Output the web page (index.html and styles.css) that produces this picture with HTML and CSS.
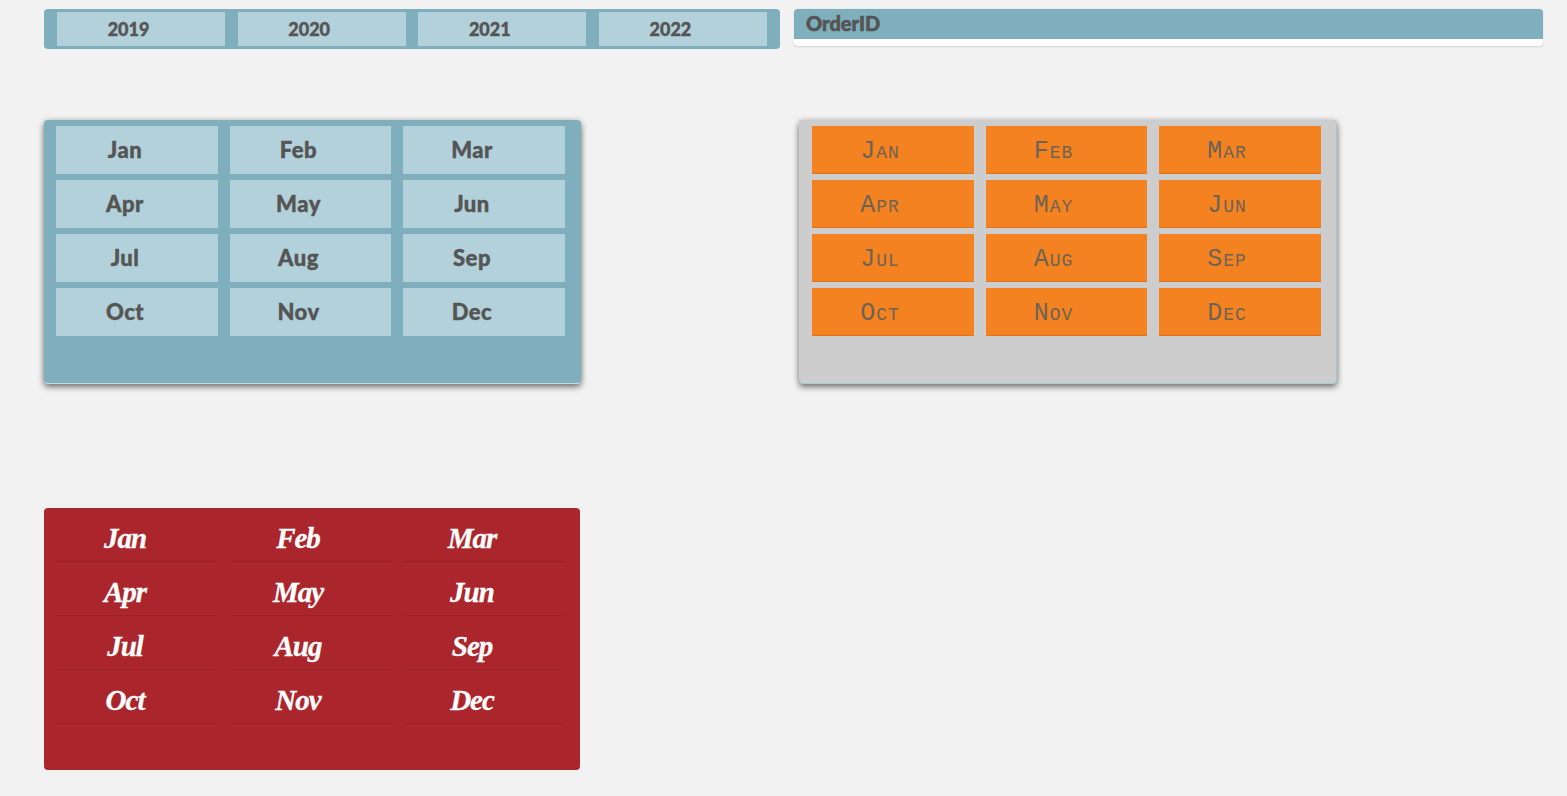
FILE: index.html
```html
<!DOCTYPE html>
<html lang="en">

<head>
    <meta charset="UTF-8">
    <title>Slicers</title>
    <link rel="stylesheet" href="styles.css">
</head>

<body>
    <div class="row row-top">
        <div class="year-slicer">
            <div class="year">2019</div>
            <div class="year">2020</div>
            <div class="year">2021</div>
            <div class="year">2022</div>
        </div>
        <div class="order-box">
            <div class="order-head">OrderID</div>
        </div>
    </div>

    <div class="row row-middle">
        <div class="months months-teal">
            <div class="month">Jan</div>
            <div class="month">Feb</div>
            <div class="month">Mar</div>
            <div class="month">Apr</div>
            <div class="month">May</div>
            <div class="month">Jun</div>
            <div class="month">Jul</div>
            <div class="month">Aug</div>
            <div class="month">Sep</div>
            <div class="month">Oct</div>
            <div class="month">Nov</div>
            <div class="month">Dec</div>
        </div>
        <div class="months months-orange">
            <div class="month">Jan</div>
            <div class="month">Feb</div>
            <div class="month">Mar</div>
            <div class="month">Apr</div>
            <div class="month">May</div>
            <div class="month">Jun</div>
            <div class="month">Jul</div>
            <div class="month">Aug</div>
            <div class="month">Sep</div>
            <div class="month">Oct</div>
            <div class="month">Nov</div>
            <div class="month">Dec</div>
        </div>
    </div>

    <div class="row row-bottom">
        <div class="months months-red">
            <div class="month">Jan</div>
            <div class="month">Feb</div>
            <div class="month">Mar</div>
            <div class="month">Apr</div>
            <div class="month">May</div>
            <div class="month">Jun</div>
            <div class="month">Jul</div>
            <div class="month">Aug</div>
            <div class="month">Sep</div>
            <div class="month">Oct</div>
            <div class="month">Nov</div>
            <div class="month">Dec</div>
        </div>
    </div>
</body>

</html>
```

FILE: styles.css
```css
:root {
    --teal: #7fafbd;
    --teal-light: #b3d1da;
    --text-color: #555555;
    --orange: #f58220;
    --grey: #cdcdcd;
    --red: #aa262c;
}

* {
    margin: 0;
    padding: 0;
    box-sizing: border-box;
}

body {
    min-height: 100vh;
    padding: 9px 0 0 44px;
    background: #f2f2f2;
    color: var(--text-color);
    font-family: Lato, sans-serif;
    overflow: hidden;
}

.row {
    display: flex;
    align-items: flex-start;
}

.row-top {
    gap: 14px;
}

.row-middle {
    gap: 218px;
    margin-top: 71px;
}

.row-bottom {
    margin-top: 124px;
}

.year-slicer {
    width: 736px;
    height: 40px;
    padding: 3px 13px;
    display: grid;
    grid-template-columns: repeat(4, 1fr);
    gap: 12.5px;
    background: var(--teal);
    border-radius: 4px;
}

.year {
    display: flex;
    align-items: center;
    justify-content: center;
    padding-right: 25px;
    background: var(--teal-light);
    font-size: 18px;
    font-weight: 900;
    -webkit-text-stroke: 0.4px var(--text-color);
}

.order-box {
    width: 749px;
    height: 38px;
    background: #ffffff;
    border-bottom: 1px solid #dddddd;
    border-radius: 4px;
    box-shadow: 0 0 1px rgba(0, 0, 0, 0.3);
    overflow: hidden;
}

.order-head {
    height: 30px;
    padding: 0 0 2px 12px;
    display: flex;
    align-items: center;
    background: var(--teal);
    font-size: 20px;
    font-weight: 900;
    -webkit-text-stroke: 0.6px var(--text-color);
}

.months {
    height: 264px;
    padding: 6px 16px 0 12px;
    display: grid;
    grid-template-columns: 162px 161px 162px;
    grid-auto-rows: 48px;
    gap: 6px 12px;
    border-radius: 4px;
}

.month {
    display: flex;
    align-items: center;
    justify-content: center;
    padding-right: 24px;
}

.months-teal {
    width: 537px;
    background: var(--teal);
    border-bottom: 1px solid #c4dce3;
    box-shadow: 0 3px 6px rgba(0, 0, 0, 0.5), 0 0 6px rgba(0, 0, 0, 0.12);
}

.months-teal .month {
    padding-bottom: 2px;
    background: var(--teal-light);
    font-size: 22px;
    font-weight: 900;
    letter-spacing: 0.5px;
    -webkit-text-stroke: 0.4px var(--text-color);
}

.months-orange {
    width: 538px;
    padding-left: 13px;
    background: var(--grey);
    border-right: 1px solid #a9c8d2;
    border-bottom: 1px solid #a9c8d2;
    box-shadow: 0 3px 6px rgba(0, 0, 0, 0.5), 0 0 6px rgba(0, 0, 0, 0.12);
}

.months-orange .month {
    padding: 3px 26px 0 0;
    background: var(--orange);
    border-bottom: 1px solid #e0731a;
    color: #6e6354;
    font-family: "Liberation Mono", monospace;
    font-size: 25px;
    font-variant: small-caps;
    letter-spacing: 1px;
}

.months-red {
    width: 536px;
    height: 262px;
    grid-template-columns: 176px 172px 160px;
    column-gap: 0;
    background: var(--red);
}

.months-red .month {
    width: 160px;
    padding-top: 1px;
    border-bottom: 1px solid #982026;
    color: #ffffff;
    font-family: "Liberation Serif", serif;
    font-size: 29px;
    font-style: italic;
    font-weight: bold;
    letter-spacing: -1px;
    -webkit-text-stroke: 0.3px #ffffff;
}

.months-red .month:nth-child(3n+1) {
    padding-right: 22px;
}

.months-red .month:nth-child(3n+2) {
    padding-right: 28px;
}
```
